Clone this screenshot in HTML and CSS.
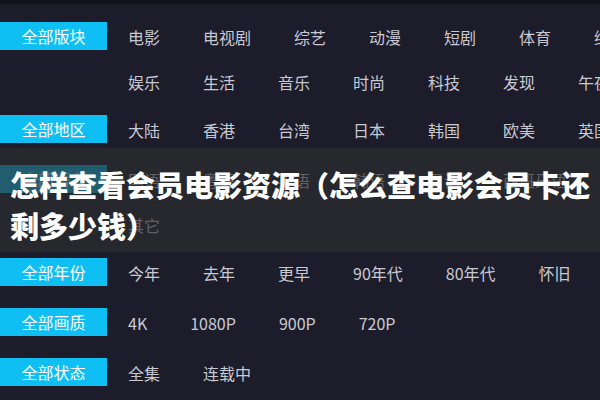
FILE: index.html
```html
<!DOCTYPE html>
<html lang="zh-CN">
<head>
<meta charset="utf-8">
<title>怎样查看会员电影资源</title>
<link rel="stylesheet" href="styles.css">
</head>
<body>
<div class="page">
  <div class="filters">
    <div class="row">
      <div class="label">全部版块</div>
      <div class="items">
        <span class="item">电影</span><span class="item">电视剧</span><span class="item">综艺</span><span class="item">动漫</span><span class="item">短剧</span><span class="item">体育</span><span class="item">综合</span>
        <span class="item">娱乐</span><span class="item">生活</span><span class="item">音乐</span><span class="item">时尚</span><span class="item">科技</span><span class="item">发现</span><span class="item">午夜</span>
      </div>
    </div>
    <div class="row single">
      <div class="label">全部地区</div>
      <div class="items">
        <span class="item">大陆</span><span class="item">香港</span><span class="item">台湾</span><span class="item">日本</span><span class="item">韩国</span><span class="item">欧美</span><span class="item">英国</span>
      </div>
    </div>
    <div class="row">
      <div class="label">全部语言</div>
      <div class="items">
        <span class="item">国语</span><span class="item">粤语</span><span class="item">英语</span><span class="item">韩语</span><span class="item">日语</span><span class="item">西班牙语</span><span class="item">其它</span>
      </div>
    </div>
    <div class="row single">
      <div class="label">全部年份</div>
      <div class="items">
        <span class="item">今年</span><span class="item">去年</span><span class="item">更早</span><span class="item">90年代</span><span class="item">80年代</span><span class="item">怀旧</span>
      </div>
    </div>
    <div class="row single">
      <div class="label">全部画质</div>
      <div class="items">
        <span class="item">4K</span><span class="item">1080P</span><span class="item">900P</span><span class="item">720P</span>
      </div>
    </div>
    <div class="row single">
      <div class="label">全部状态</div>
      <div class="items">
        <span class="item">全集</span><span class="item">连载中</span>
      </div>
    </div>
  </div>
  <div class="banner">
    <h1 class="title">怎样查看会员电影资源（怎么查电影会员卡还剩多少钱）</h1>
  </div>
</div>
</body>
</html>
```

FILE: styles.css
```css
html, body {
  margin: 0;
  padding: 0;
  width: 600px;
  height: 400px;
  overflow: hidden;
  background: #1c1c2b;
}

.page {
  position: relative;
  width: 600px;
  height: 400px;
  overflow: hidden;
  border-top: 4px solid #11111b;
  box-sizing: border-box;
  font-family: "Noto Sans CJK SC", "Noto Sans", sans-serif;
}

.filters {
  width: 640px;
  padding-top: 18px;
}

.row {
  display: flex;
  align-items: flex-start;
  margin-bottom: 20px;
}

.row.single {
  margin-bottom: 22px;
}

.label {
  flex: 0 0 107px;
  height: 28px;
  line-height: 28px;
  background: #0fbff3;
  color: #ffffff;
  font-size: 16px;
  text-align: center;
  margin-right: 21px;
}

.items {
  flex: 0 0 507px;
  display: flex;
  flex-wrap: wrap;
  column-gap: 43px;
  row-gap: 17px;
}

.item {
  height: 28px;
  line-height: 30px;
  font-size: 16px;
  color: #c9c9d2;
  white-space: nowrap;
}

.banner {
  position: absolute;
  left: 0;
  top: 144px;
  width: 600px;
  height: 104px;
  background: rgba(44, 45, 49, 0.68);
  box-sizing: border-box;
  padding: 16px 10px 0 10px;
}

.title {
  margin: 0;
  font-size: 29px;
  line-height: 41px;
  font-weight: 900;
  color: #ffffff;
  letter-spacing: 0;
}
```
